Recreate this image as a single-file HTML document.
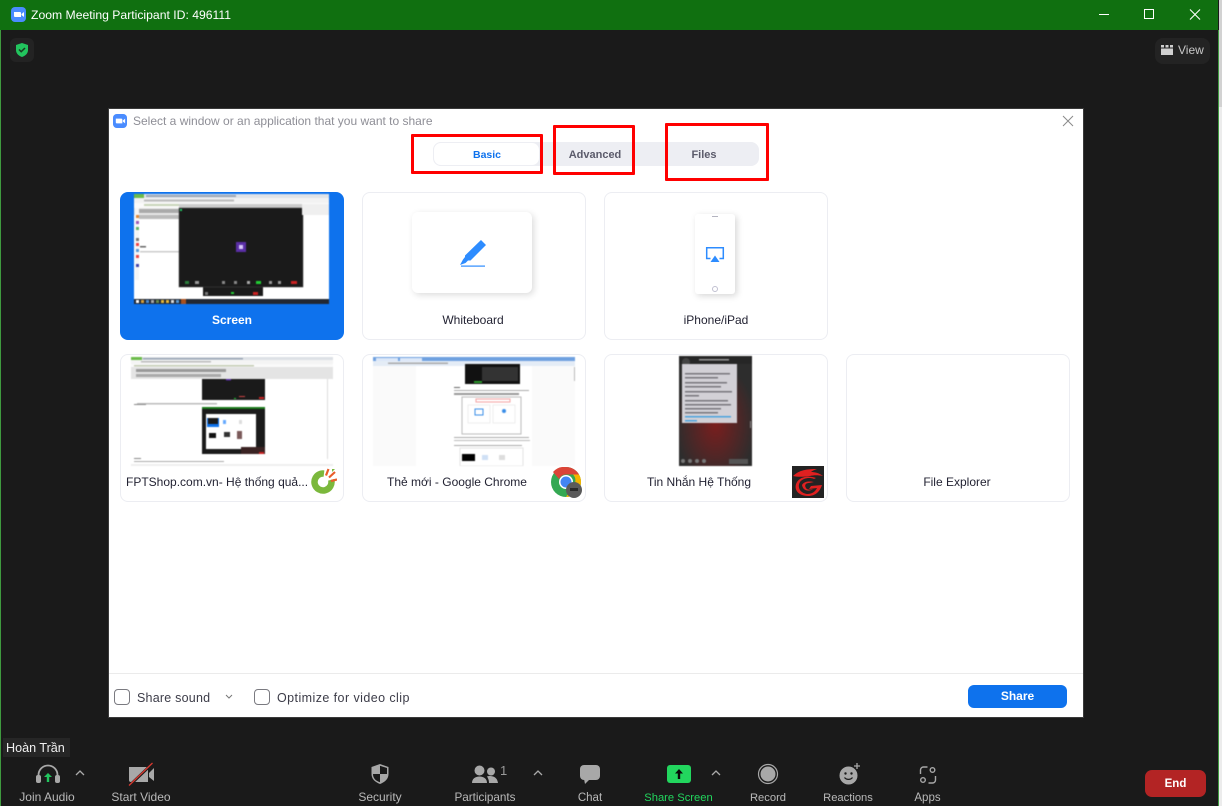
<!DOCTYPE html>
<html><head><meta charset="utf-8"><style>
html,body{margin:0;padding:0;background:#1a1a1a}
#r{position:relative;width:1222px;height:806px;overflow:hidden;background:#1a1a1a;font-family:"Liberation Sans","Noto Sans CJK SC",sans-serif}
#r div,#r svg{position:absolute}
.t{white-space:nowrap;line-height:16px}
.c{text-align:center}
.card{box-sizing:border-box;width:224px;height:148px;border:1px solid #ecedf2;border-radius:8px;background:#fff}
.lbl{color:#232333;font-size:12px;width:224px;text-align:center;white-space:nowrap;line-height:16px}
.tb{color:#b9b9b9;font-size:11.500px;line-height:14px;top:791px;white-space:nowrap;text-align:center}
.red{box-sizing:border-box;border:3px solid #f00;border-radius:1px}
.th{filter:blur(.6px)}
</style></head><body><div id="r">
<div style="left:1219px;top:0;width:3px;height:107px;background:#d2d2d2"></div>
<div style="left:1219px;top:107px;width:3px;height:699px;background:#ececec"></div>
<div style="left:1218px;top:30px;width:1px;height:776px;background:#3f9a3f"></div>
<div style="left:0;top:30px;width:1px;height:776px;background:#3f9a3f"></div>
<div style="left:0;top:0;width:1218px;height:30px;background:#107010"></div>

<svg style="left:11px;top:7px" width="15" height="15" viewBox="0 0 15 15"><rect width="15" height="15" rx="4" fill="#4a8cff"/><path d="M3 5h6a1 1 0 0 1 1 1v4H4a1 1 0 0 1-1-1z" fill="#fff"/><path d="M10.500 7l2.500-2v5l-2.500-2z" fill="#fff"/></svg>
<div class="t" style="left:31px;top:7px;color:#fff;font-size:12.200px">Zoom Meeting Participant ID: 496111</div>
<svg style="left:1090px;top:0" width="128" height="30" viewBox="0 0 128 30" fill="none" stroke="#fff" stroke-width="1"><path d="M9 14.500h10"/><rect x="54.500" y="9.500" width="9" height="9"/><path d="M100 9.500l10 10M110 9.500l-10 10" stroke-width="1.100"/></svg>

<div style="left:10px;top:38px;width:24px;height:24px;border-radius:6px;background:#232323"></div>
<svg style="left:15px;top:42px" width="14" height="16" viewBox="0 0 14 16"><path d="M7 1l6 2v5c0 3.500-2.500 5.800-6 7-3.500-1.200-6-3.500-6-7V3z" fill="#22c55e"/><path d="M4 7.500l2.200 2.200L10 6" fill="none" stroke="#1a3a22" stroke-width="1.500"/></svg>

<div style="left:1155px;top:38px;width:55px;height:26px;border-radius:8px;background:#232323"></div>
<svg style="left:1161px;top:44px" width="12" height="12" viewBox="0 0 12 12"><path d="M0 1h3v2.500H0zM4.500 1h3v2.500h-3zM9 1h3v2.500H9z" fill="#d0d0d0"/><rect y="4.500" width="12" height="6.500" fill="#d0d0d0"/></svg>
<div class="t" style="left:1178px;top:42px;color:#c8c8c8;font-size:12px">View</div>

<!-- dialog -->
<div style="left:108px;top:108px;width:976px;height:610px;background:#3a3a3a"></div>
<div style="left:109px;top:109px;width:974px;height:608px;background:#fff"></div>
<svg style="left:113px;top:114px" width="14" height="14" viewBox="0 0 15 15"><rect width="15" height="15" rx="4" fill="#4a8cff"/><path d="M3 5h6a1 1 0 0 1 1 1v4H4a1 1 0 0 1-1-1z" fill="#fff"/><path d="M10.500 7l2.500-2v5l-2.500-2z" fill="#fff"/></svg>
<div class="t" style="left:133px;top:113px;color:#8e8e96;font-size:12px">Select a window or an application that you want to share</div>
<svg style="left:1062px;top:115px" width="12" height="12" viewBox="0 0 12 12"><path d="M1 1l10 10M11 1L1 11" stroke="#8a8a8a" stroke-width="1"/></svg>

<div style="left:433px;top:142px;width:326px;height:24px;border-radius:8px;background:#edeef3"></div>
<div style="left:433px;top:142px;width:107px;height:24px;box-sizing:border-box;border:1px solid #edeef3;border-radius:8px;background:#fff"></div>
<div class="t c" style="left:433px;top:147px;width:108px;color:#0e72ed;font-size:10.500px;font-weight:bold">Basic</div>
<div class="t c" style="left:541px;top:147px;width:108px;color:#5b5b6b;font-size:11px;font-weight:bold">Advanced</div>
<div class="t c" style="left:650px;top:147px;width:108px;color:#5b5b6b;font-size:11px;font-weight:bold">Files</div>
<div class="red" style="left:411px;top:134px;width:132px;height:40px"></div>
<div class="red" style="left:553px;top:125px;width:82px;height:50px"></div>
<div class="red" style="left:665px;top:123px;width:104px;height:58px"></div>

<!-- Screen card -->
<div style="left:120px;top:192px;width:224px;height:148px;border-radius:8px;background:#0e72ed"></div>
<svg class="th" style="left:134px;top:194px" width="195" height="110" viewBox="0 0 195 110">
<rect width="195" height="110" fill="#fff"/>
<rect width="195" height="4" fill="#dfe3e8"/><rect width="10" height="4" fill="#6cbb4a"/>
<rect x="12" y="1" width="90" height="2" fill="#9aa5b5"/>
<rect y="4" width="195" height="5" fill="#f2f2f2"/><rect x="10" y="5.500" width="90" height="2" fill="#bbb"/>
<rect y="9" width="195" height="5" fill="#fafafa"/><rect x="10" y="10" width="110" height="2" fill="#c8d4b8"/>
<rect y="14" width="195" height="7" fill="#e8e8e8"/><rect x="5" y="15" width="40" height="4" fill="#aaa"/><rect x="5" y="21" width="40" height="4" fill="#bbb"/>
<rect x="1" y="14" width="4" height="72" fill="#f5f5f5"/>
<rect x="2" y="21" width="3" height="3" fill="#e08a3a"/><rect x="2" y="27" width="3" height="3" fill="#9b59b6"/><rect x="2" y="33" width="3" height="3" fill="#62b36a"/><rect x="2" y="44" width="3" height="3" fill="#777"/><rect x="2" y="49" width="3" height="3" fill="#e44"/><rect x="2" y="55" width="3" height="3" fill="#5b9bd5"/><rect x="2" y="61" width="3" height="3" fill="#e44"/><rect x="2" y="70" width="3" height="3" fill="#44a"/>
<rect x="6" y="52" width="6" height="1.500" fill="#666"/><rect x="6" y="57" width="39" height="1.500" fill="#ccc"/>
<rect x="45" y="10" width="124" height="4" fill="#ccc"/>
<rect x="45" y="14" width="124" height="79" fill="#1a1a1a"/>
<rect x="69" y="93" width="60" height="9" fill="#1a1a1a"/>
<rect x="45" y="14" width="124" height="79" fill="none" stroke="#444" stroke-width=".5"/>
<rect x="102" y="48" width="10" height="10" fill="#5a2ea6"/><rect x="105" y="51" width="4" height="4" fill="#d8c8f8"/>
<rect x="46" y="15" width="2" height="2" fill="#2c6"/>
<rect x="168" y="10" width="27" height="11" fill="#efefef"/>
<rect x="0" y="105" width="195" height="5" fill="#222833"/>
<rect x="2" y="106" width="3" height="3" fill="#fff"/><rect x="7" y="106" width="3" height="3" fill="#d9a13a"/><rect x="12" y="106" width="3" height="3" fill="#4a8cd4"/><rect x="17" y="106" width="3" height="3" fill="#aaa"/><rect x="22" y="106" width="3" height="3" fill="#6b8e4e"/><rect x="27" y="106" width="3" height="3" fill="#e8b93a"/><rect x="32" y="106" width="3" height="3" fill="#e8b93a"/><rect x="37" y="106" width="3" height="3" fill="#ddd"/><rect x="42" y="106" width="3" height="3" fill="#5b9bd5"/><rect x="47" y="105" width="5" height="5" fill="#a8501e"/>
<rect x="51" y="87" width="4" height="3" fill="#2a7d3a"/><rect x="61" y="87" width="4" height="3" fill="#999"/><rect x="88" y="87" width="3" height="3" fill="#888"/><rect x="100" y="87" width="3" height="3" fill="#888"/><rect x="113" y="87" width="3" height="3" fill="#aaa"/><rect x="122" y="87" width="5" height="3" fill="#2c3"/><rect x="135" y="87" width="3" height="3" fill="#999"/><rect x="144" y="87" width="3" height="3" fill="#999"/><rect x="157" y="87" width="6" height="3" fill="#c22"/>
<rect x="71" y="98" width="3" height="3" fill="#777"/><rect x="97" y="98" width="3" height="2" fill="#2c3"/><rect x="119" y="98" width="5" height="3" fill="#c22"/>
</svg>
<div class="lbl" style="left:120px;top:312px;color:#fff;font-weight:bold;font-size:12px">Screen</div>

<!-- Whiteboard -->
<div class="card" style="left:362px;top:192px"></div>
<div style="left:412px;top:212px;width:120px;height:81px;border-radius:6px;background:#fff;box-shadow:2px 2px 7px rgba(0,0,0,.14)"></div>
<svg style="left:460px;top:239px" width="27" height="29" viewBox="0 0 27 29"><path d="M21 1l5 5-15.500 15.500H8L5.500 24 0 26l3-5.500L5 18v-1.500z" fill="#2d8cff"/><rect x="1" y="26.500" width="24" height="1.200" fill="#2d8cff"/></svg>
<div class="lbl" style="left:361px;top:312px">Whiteboard</div>

<!-- iPhone -->
<div class="card" style="left:604px;top:192px"></div>
<div style="left:695px;top:214px;width:40px;height:80px;border-radius:3px;background:#fff;box-shadow:2px 2px 7px rgba(0,0,0,.16)"></div>
<div style="left:712px;top:216px;width:6px;height:1px;background:#b4b4c0"></div>
<svg style="left:705px;top:246px" width="20" height="18" viewBox="0 0 20 18"><path d="M5.500 12.500H1.700V1.700h16.600v10.800H14.500" fill="none" stroke="#2d8cff" stroke-width="1.500"/><path d="M10 9.500l4.500 6.500h-9z" fill="#2d8cff"/></svg>
<div style="left:712px;top:286px;width:6px;height:6px;box-sizing:border-box;border:1px solid #c0bfd0;border-radius:50%"></div>
<div class="lbl" style="left:604px;top:312px">iPhone/iPad</div>

<!-- FPT -->
<div class="card" style="left:120px;top:354px"></div>
<svg class="th" style="left:131px;top:357px" width="202" height="109" viewBox="0 0 202 109">
<rect width="202" height="109" fill="#fff"/>
<rect width="202" height="3" fill="#dde1e6"/><rect width="11" height="3" fill="#6cbb4a"/><rect x="12" y="1" width="100" height="1.500" fill="#9aa5b5"/>
<rect y="3" width="202" height="4" fill="#f4f4f4"/><rect x="10" y="4" width="70" height="1.500" fill="#bbb"/>
<rect y="7" width="202" height="3" fill="#fafafa"/><rect x="3" y="8" width="120" height="1.500" fill="#c4ccb4"/>
<rect y="10" width="202" height="12" fill="#e4e4e4"/><rect x="5" y="12" width="90" height="3" fill="#999"/><rect x="5" y="17" width="85" height="3" fill="#aaa"/>
<rect x="71" y="22" width="63" height="21" fill="#1a1a1a"/><rect x="95" y="22" width="5" height="1.500" fill="#5a2ea6"/><rect x="108" y="39" width="6" height="1" fill="#c44"/><rect x="103" y="41" width="2" height="1" fill="#2c3"/><rect x="128" y="40" width="5" height="2" fill="#c22"/>
<rect x="6" y="46" width="80" height="1.500" fill="#bbb"/><rect x="3" y="47" width="12" height="1" fill="#888"/>
<rect x="71" y="50" width="63" height="47" fill="#1a1a1a"/><rect x="71" y="50" width="63" height="2" fill="#1a7a1a"/>
<rect x="75" y="57" width="50" height="35" fill="#fff"/><rect x="76" y="61" width="12" height="9" fill="#0e72ed"/><rect x="77" y="61" width="10" height="6" fill="#1a1a1a"/><rect x="92" y="63" width="3" height="4" fill="#6af"/><rect x="108" y="63" width="3" height="4" fill="#ddd"/><rect x="78" y="76" width="7" height="5" fill="#111"/><rect x="93" y="75" width="6" height="5" fill="#333"/><rect x="106" y="74" width="5" height="8" fill="#7a5a5a"/>
<rect x="110" y="90" width="24" height="7" fill="#3a2222"/><rect x="128" y="95" width="5" height="2" fill="#c22"/>
<rect x="3" y="101" width="7" height="1" fill="#888"/><rect x="3" y="104" width="90" height="1" fill="#aaa"/>
<rect x="196" y="22" width="1" height="80" fill="#ddd"/><rect x="0" y="107" width="202" height="2" fill="#eee"/>
</svg>
<div class="t" style="left:126px;top:474px;color:#232333;font-size:12px">FPTShop.com.vn- Hệ thống quả...</div>
<svg style="left:311px;top:468px" width="26" height="26" viewBox="0 0 26 26"><circle cx="12" cy="14" r="8.500" fill="none" stroke="#7bb83c" stroke-width="6.500" stroke-dasharray="43 10.400" transform="rotate(-15 12 14)"/><path d="M15 7.500L17.500 1M18 9.500L24 4M20 13l6-1.500" stroke="#e85d2a" stroke-width="2.200" fill="none"/><path d="M21 1l3 0-3 3z" fill="#7bb83c"/></svg>

<!-- Chrome -->
<div class="card" style="left:362px;top:354px"></div>
<svg class="th" style="left:373px;top:357px" width="202" height="109" viewBox="0 0 202 109">
<rect width="202" height="109" fill="#fafafa"/><rect x="43" y="9" width="116" height="100" fill="#fff"/>
<rect width="202" height="4" fill="#6fa1e0"/><rect x="3" y="1" width="22" height="3" fill="#dce8f8"/><rect x="27" y="1" width="22" height="3" fill="#dce8f8"/>
<rect y="4" width="202" height="5" fill="#e4ecf6"/><rect x="15" y="5.500" width="60" height="1.500" fill="#aaa"/>
<rect x="92" y="7" width="55" height="20" fill="#111"/><rect x="109" y="10" width="36" height="14" fill="#333"/><rect x="101" y="24" width="8" height="2" fill="#2a9a2a"/>
<rect x="81" y="30" width="6" height="1" fill="#666"/><rect x="81" y="33" width="75" height="1" fill="#aaa"/><rect x="81" y="36" width="65" height="2" fill="#999"/>
<rect x="89" y="40" width="59" height="37" fill="#fff" stroke="#bbb"/><rect x="103" y="42" width="34" height="3" fill="#fff" stroke="#f3a3a3"/>
<rect x="95" y="48" width="22" height="18" fill="none" stroke="#eee"/><rect x="102" y="52" width="8" height="6" fill="none" stroke="#3a8ee8" stroke-width="1"/><rect x="120" y="48" width="22" height="18" fill="none" stroke="#eee"/><circle cx="131" cy="54" r="2" fill="#3a8ee8"/>
<rect x="81" y="80" width="75" height="1" fill="#aaa"/><rect x="81" y="83" width="76" height="1" fill="#bbb"/><rect x="81" y="88" width="68" height="1" fill="#aaa"/>
<rect x="87" y="91" width="63" height="18" fill="#fff" stroke="#e4e4e4"/><rect x="89" y="97" width="13" height="7" fill="#000"/><rect x="109" y="98" width="6" height="5" fill="#cfe0f5"/><rect x="126" y="98" width="6" height="5" fill="#ddd"/>
<rect x="201" y="10" width="1" height="14" fill="#bbb"/>
</svg>
<div class="lbl" style="left:345px;top:474px">Thẻ mới - Google Chrome</div>
<svg style="left:551px;top:467px" width="32" height="32" viewBox="0 0 32 32"><circle cx="15" cy="15" r="15" fill="#34a853"/><path d="M15 0a15 15 0 0 1 13 7.500H15a7.500 7.500 0 0 0-7 4.500L2 5A15 15 0 0 1 15 0z" fill="#db4437"/><path d="M28 7.500A15 15 0 0 1 15 30l7-11a8 8 0 0 0 0-11.500z" fill="#f4b400"/><circle cx="15" cy="15" r="7" fill="#fff"/><circle cx="15" cy="15" r="5.500" fill="#4285f4"/><circle cx="23" cy="23" r="8" fill="#5a5a5a"/><rect x="19" y="21" width="8" height="3" fill="#2a2a2a"/></svg>

<!-- Tin nhan -->
<div class="card" style="left:604px;top:354px"></div>
<svg class="th" style="left:679px;top:356px" width="73" height="110" viewBox="0 0 73 110">
<defs><radialGradient id="g" cx=".5" cy=".62" r=".55"><stop offset="0" stop-color="#7a1e1e"/><stop offset="1" stop-color="#2d2d2d"/></radialGradient></defs>
<rect width="73" height="110" fill="url(#g)"/><rect width="73" height="8" fill="#262626"/><rect x="20" y="3" width="30" height="1.500" fill="#999"/>
<circle cx="7" cy="6" r="4" fill="#444"/>
<rect x="3" y="8" width="55" height="59" fill="#d2d0d6"/>
<g fill="#77757c"><rect x="6" y="17" width="45" height="1.500"/><rect x="6" y="21" width="33" height="1.500"/><rect x="6" y="26" width="42" height="1.500"/><rect x="6" y="30" width="36" height="1.500"/><rect x="6" y="35" width="47" height="1.500"/><rect x="6" y="39" width="14" height="1.500"/><rect x="6" y="44" width="43" height="1.500"/><rect x="6" y="48" width="46" height="1.500"/><rect x="6" y="52" width="36" height="1.500"/><rect x="6" y="56" width="33" height="1.500"/></g>
<rect x="6" y="60" width="46" height="1.500" fill="#4ba3de"/><rect x="6" y="64" width="12" height="1.500" fill="#4ba3de"/>
<rect x="71" y="65" width="1" height="7" fill="#888"/>
<rect x="50" y="103" width="19" height="5" fill="#555"/>
<g fill="#777"><circle cx="4" cy="105" r="2"/><circle cx="11" cy="105" r="2"/><circle cx="18" cy="105" r="2"/><circle cx="25" cy="105" r="2"/></g>
</svg>
<div class="lbl" style="left:587px;top:474px">Tin Nhắn Hệ Thống</div>
<svg style="left:792px;top:466px" width="32" height="32" viewBox="0 0 32 32"><rect width="32" height="32" fill="#232323"/><path d="M1 10c6-6 14-7 24-7-3 1-5 2-6 3 4 0 8 1 12 4-5-1-9-1-13 0C10 11 6 11 1 10z" fill="#e02020"/><path d="M22 13c-4-2-11-1-14 3-3 5 0 11 7 12 5 0 8-2 10-6l-8 1 2-3 11-1c-2 6-6 11-14 11C6 30 1 23 5 16c3-5 11-7 19-4z" fill="#e02020"/><path d="M10 19c2-4 8-4 12-3l-5 1c-3 0-5 2-3 5 1 2 4 2 7 1-4 3-10 2-11-4z" fill="#e02020"/></svg>

<!-- File explorer -->
<div class="card" style="left:846px;top:354px"></div>
<div class="lbl" style="left:845px;top:474px">File Explorer</div>

<!-- footer -->
<div style="left:109px;top:673px;width:974px;height:1px;background:#ebebeb"></div>
<div style="left:114px;top:689px;width:16px;height:16px;box-sizing:border-box;border:1px solid #7a7a80;border-radius:4px"></div>
<div class="t" style="left:137px;top:690px;color:#3c3c48;font-size:12.500px;letter-spacing:.22px">Share sound</div>
<svg style="left:225px;top:694px" width="8" height="6" viewBox="0 0 8 6"><path d="M1 1l3 3 3-3" fill="none" stroke="#777" stroke-width="1"/></svg>
<div style="left:254px;top:689px;width:16px;height:16px;box-sizing:border-box;border:1px solid #7a7a80;border-radius:4px"></div>
<div class="t" style="left:277px;top:690px;color:#3c3c48;font-size:12.500px;letter-spacing:.43px">Optimize for video clip</div>
<div class="t c" style="left:968px;top:685px;width:99px;height:23px;line-height:23px;border-radius:6px;background:#0e72ed;color:#fff;font-size:12px;font-weight:bold">Share</div>

<!-- name -->
<div class="t" style="left:3px;top:738px;width:67px;height:19px;background:#262626"></div>
<div class="t" style="left:6px;top:740px;color:#f0f0f0;font-size:12.600px">Hoàn Trần</div>

<!-- toolbar -->
<svg style="left:35px;top:764px" width="26" height="22" viewBox="0 0 26 22"><path d="M3.500 14V11a9.500 9.500 0 0 1 19 0v3" fill="none" stroke="#a8a8a8" stroke-width="1.800"/><rect x="1" y="11" width="5" height="8" rx="2" fill="#a8a8a8"/><rect x="20" y="11" width="5" height="8" rx="2" fill="#a8a8a8"/><path d="M13 9l4 4h-2.800v5h-2.400v-5H9z" fill="#22c55e"/></svg>
<svg style="left:75px;top:770px" width="10" height="7" viewBox="0 0 10 7"><path d="M1 5l4-4 4 4" fill="none" stroke="#aaa" stroke-width="1.300"/></svg>
<div class="tb" style="left:6px;top:790px;width:82px;font-size:12px">Join Audio</div>

<svg style="left:127px;top:762px" width="28" height="24" viewBox="0 0 28 24"><path d="M2 5h17a2 2 0 0 1 2 2v13H4a2 2 0 0 1-2-2z" fill="#a8a8a8"/><path d="M22 11l5-5v13l-5-4z" fill="#a8a8a8"/><path d="M4 24L27 2" stroke="#1a1a1a" stroke-width="2.800" transform="translate(-1.500 -.5)"/><path d="M2 23.500L25.500 1" stroke="#d8382f" stroke-width="1.300"/></svg>
<div class="tb" style="left:100px;top:790px;width:82px;font-size:12px">Start Video</div>

<svg style="left:370px;top:763px" width="20" height="22" viewBox="0 0 20 22"><path d="M10 1l8.500 3v7c0 5-3.500 8-8.500 10-5-2-8.500-5-8.500-10V4z" fill="#a8a8a8"/><path d="M10 2.800V11H3c0 4 2.500 6.800 7 8.300V11h7V5z" fill="#1a1a1a"/></svg>
<div class="tb" style="left:339px;top:790px;width:82px;font-size:12px">Security</div>

<svg style="left:472px;top:764px" width="26" height="20" viewBox="0 0 26 20"><circle cx="7.500" cy="6.500" r="5" fill="#a8a8a8"/><path d="M0 19c0-4 3-6.500 7.500-6.500S15 15 15 19z" fill="#a8a8a8"/><circle cx="19" cy="7.500" r="4" fill="#a8a8a8"/><path d="M15 12.500c3-1 10-1 11 6.500h-9c0-3-1-5-2-6.500z" fill="#a8a8a8"/></svg>
<div class="t" style="left:500px;top:763px;color:#999;font-size:13px">1</div>
<svg style="left:533px;top:770px" width="10" height="7" viewBox="0 0 10 7"><path d="M1 5l4-4 4 4" fill="none" stroke="#aaa" stroke-width="1.300"/></svg>
<div class="tb" style="left:444px;width:82px;font-size:11.700px">Participants</div>

<svg style="left:579px;top:764px" width="22" height="22" viewBox="0 0 22 22"><rect x="1" y="1" width="20" height="15" rx="4" fill="#a8a8a8"/><path d="M5 15h6l-5 5z" fill="#a8a8a8"/></svg>
<div class="tb" style="left:549px;width:82px">Chat</div>

<div style="left:667px;top:765px;width:24px;height:18px;border-radius:3px;background:#22d65e"></div>
<svg style="left:674px;top:768px" width="10" height="12" viewBox="0 0 10 12"><path d="M5 1l4 4.500H6.200V11H3.800V5.500H1z" fill="#0a0a0a"/></svg>
<svg style="left:711px;top:770px" width="10" height="7" viewBox="0 0 10 7"><path d="M1 5l4-4 4 4" fill="none" stroke="#aaa" stroke-width="1.300"/></svg>
<div class="tb" style="left:637.500px;width:82px;color:#22d65e;font-size:11.200px">Share Screen</div>

<svg style="left:757px;top:763px" width="22" height="22" viewBox="0 0 22 22"><circle cx="11" cy="11" r="9.500" fill="none" stroke="#a8a8a8" stroke-width="1.200"/><circle cx="11" cy="11" r="7.500" fill="#a8a8a8"/></svg>
<div class="tb" style="left:727px;width:82px;font-size:11.200px">Record</div>

<svg style="left:838px;top:762px" width="24" height="24" viewBox="0 0 24 24"><circle cx="10.500" cy="13.500" r="9" fill="#a8a8a8"/><circle cx="7.500" cy="11.500" r="1.200" fill="#1a1a1a"/><circle cx="13.500" cy="11.500" r="1.200" fill="#1a1a1a"/><path d="M6.500 15.500c2 2.500 6 2.500 8 0" fill="none" stroke="#1a1a1a" stroke-width="1.300"/><path d="M19 1v6M16 4h6" stroke="#a8a8a8" stroke-width="1.300"/></svg>
<div class="tb" style="left:807px;width:82px;font-size:11.200px">Reactions</div>

<svg style="left:919px;top:766px" width="18" height="18" viewBox="0 0 18 18" fill="none" stroke="#a8a8a8" stroke-width="1.400"><path d="M1.500 8V4a3 3 0 0 1 3-3h4"/><path d="M16.500 10v4a3 3 0 0 1-3 3h-4"/><circle cx="13.500" cy="4" r="2.300"/><circle cx="4" cy="14" r="2.300"/></svg>
<div class="tb" style="left:886.500px;width:82px">Apps</div>

<div class="t c" style="left:1145px;top:770px;width:61px;height:27px;line-height:28px;border-radius:7px;background:#b32424;color:#fff;font-size:11.500px;font-weight:bold">End</div>
</div></body></html>
